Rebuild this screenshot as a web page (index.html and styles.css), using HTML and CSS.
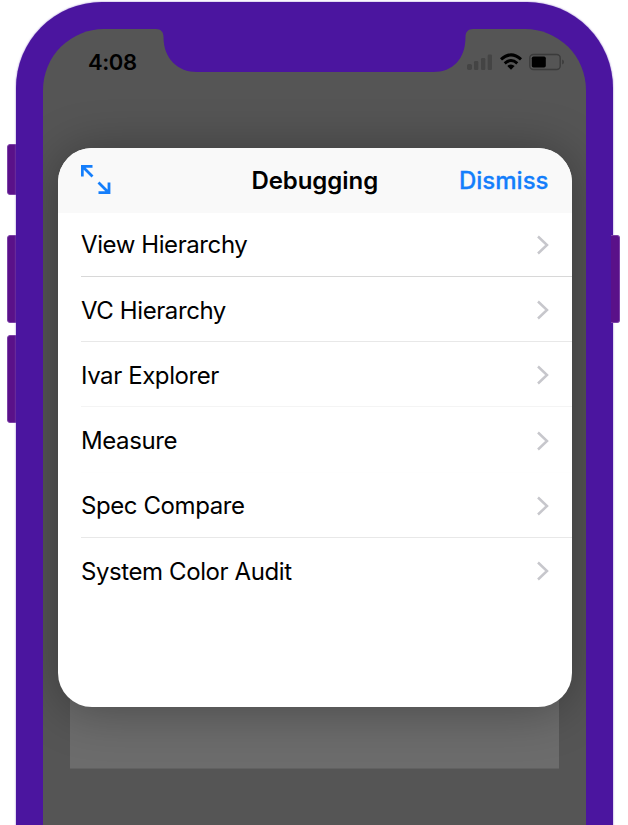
FILE: index.html
```html
<!DOCTYPE html>
<html lang="en">
<head>
<meta charset="utf-8">
<title>Debugging</title>
<link rel="stylesheet" href="styles.css">
</head>
<body>
<div class="stage">
  <span class="side-button mute"></span>
  <span class="side-button volume-up"></span>
  <span class="side-button volume-down"></span>
  <span class="side-button power"></span>
  <div class="phone">
    <div class="screen">
      <svg class="notch" width="320" height="46" viewBox="0 0 320 46"><path d="M0 0H320V3H317C312 3 309.500 6 309.500 11C309.500 33 297 46 277 46H41C22 46 7.500 33 7.500 11C7.500 6 5 3 0 3Z"/></svg>
      <div class="status">
        <span class="time">4:08</span>
        <div class="indicators">
          <svg width="26" height="18" viewBox="0 0 26 18" class="signal"><rect x="0" y="11" width="5" height="6" rx="1.800"/><rect x="7" y="8" width="4.300" height="9" rx="1.300"/><rect x="14" y="5" width="4.300" height="12" rx="1.300"/><rect x="20.700" y="1.500" width="4.300" height="15.500" rx="1.300"/></svg>
          <svg width="22" height="18" viewBox="0 0 22 18" class="wifi"><path d="M1 6.400Q11-2.700 21 6.400M4.700 10.300Q11 4.800 17.300 10.300"/><path class="dot" d="M11 16.800L7.300 13Q11 10 14.700 13Z"/></svg>
          <svg width="36" height="18" viewBox="0 0 36 18" class="battery"><rect class="shell" x=".8" y="1.500" width="30.400" height="15" rx="3.500"/><rect x="2.800" y="3.500" width="14" height="11" rx="1.700"/><path class="tip" d="M33.200 6.500Q35 7.200 35 9T33.200 11.500Z"/></svg>
        </div>
      </div>
      <div class="backdrop"></div>
      <main class="sheet">
        <header class="bar">
          <svg class="expand" width="30" height="30" viewBox="0 0 30 30"><path d="M1.300 12.500V2.300H11.500M1.500 2.500L11.500 12.500M28 18.500V28.700H17.500M27.500 28.500L17.500 18.500"/></svg>
          <h1 class="title">Debugging</h1>
          <span class="dismiss">Dismiss</span>
        </header>
        <ul class="list">
          <li class="row strong"><span>View Hierarchy</span><svg class="chevron" width="13" height="20" viewBox="0 0 13 20"><path d="M2 1.500L11 10L2 18.500"/></svg></li>
          <li class="row"><span>VC Hierarchy</span><svg class="chevron" width="13" height="20" viewBox="0 0 13 20"><path d="M2 1.500L11 10L2 18.500"/></svg></li>
          <li class="row faint"><span>Ivar Explorer</span><svg class="chevron" width="13" height="20" viewBox="0 0 13 20"><path d="M2 1.500L11 10L2 18.500"/></svg></li>
          <li class="row fainter"><span>Measure</span><svg class="chevron" width="13" height="20" viewBox="0 0 13 20"><path d="M2 1.500L11 10L2 18.500"/></svg></li>
          <li class="row"><span>Spec Compare</span><svg class="chevron" width="13" height="20" viewBox="0 0 13 20"><path d="M2 1.500L11 10L2 18.500"/></svg></li>
          <li class="row last"><span>System Color Audit</span><svg class="chevron" width="13" height="20" viewBox="0 0 13 20"><path d="M2 1.500L11 10L2 18.500"/></svg></li>
        </ul>
      </main>
    </div>
  </div>
</div>
</body>
</html>
```
FILE: styles.css
```css
* { box-sizing: border-box; }
body { margin: 0; background: #fff; font-family: Inter, "Liberation Sans", sans-serif; color: #000; }
.stage { position: relative; width: 628px; height: 825px; overflow: hidden; padding: 1.5px 15.5px 0 15.5px; }
.phone { position: relative; height: 900px; padding: 27.5px 26.5px 0 27.5px; background: #4b159f; border-radius: 86px 86px 0 0; box-shadow: 0 0 2px #8d6fc8; }
.side-button { position: absolute; width: 12px; background: #5a1189; border: 1px solid #7c40a6; border-radius: 3px; }
.mute { left: 6.5px; top: 144px; height: 51px; }
.volume-up { left: 6.5px; top: 235px; height: 88px; }
.volume-down { left: 6.5px; top: 335px; height: 88px; }
.power { right: 8px; top: 235px; height: 88px; z-index: 1; width: 9px; border-left: 0; border-radius: 0 3px 3px 0; }
.screen { position: relative; height: 860px; overflow: hidden; background: #555; border-radius: 61px 61px 0 0; }
.notch { position: absolute; left: 113px; top: -3px; fill: #4b159f; }
.status { display: flex; justify-content: space-between; height: 119px; padding: 20px 21px 0 45px; }
.time { font-size: 22px; line-height: 26px; font-weight: 600; letter-spacing: -.4px; }
.indicators { display: flex; gap: 7px; padding-top: 4px; }
.signal { fill: #444; }
.wifi { fill: none; stroke: #000; stroke-width: 3; }
.wifi .dot { fill: #000; stroke: none; }
.battery .shell { fill: none; stroke: #3b3b3b; stroke-width: 1.4; }
.battery .tip { fill: #3b3b3b; }
.backdrop { position: absolute; left: 27px; top: 641px; width: 489px; height: 99px; background: #6c6c6c; border-bottom: 1px solid #616161; }
.sheet { position: relative; margin: 0 14.5px 0 15px; height: 559px; border-radius: 34px; background: #fff; box-shadow: 0 3px 50px rgba(0,0,0,.33); }
.bar { display: grid; grid-template-columns: 1fr auto 1fr; align-items: center; height: 65px; padding: 0 23px 1px 23px; background: #f9f9f9; border-radius: 34px 34px 0 0; }
.expand { fill: none; stroke: #147efb; stroke-width: 2.8; margin-bottom: 2px; }
.title { margin: 1px 0 0; font-size: 24px; line-height: 30px; font-weight: 600; letter-spacing: -.05px; }
.dismiss { justify-self: end; margin-top: 1px; font-size: 24px; line-height: 30px; font-weight: 500; -webkit-text-stroke: .3px #147efb; color: #147efb; }
.list { list-style: none; margin: 0; padding: 0 0 0 23px; font-size: 24px; letter-spacing: -.41px; }
.row { display: flex; align-items: center; justify-content: space-between; height: 65.1px; padding: 2px 22.5px 0 0; border-bottom: 1px solid #e8e8e8; }
.row.strong { height: 64px; border-color: #d8d8d8; padding-top: 0; }
.row.faint { border-color: #f4f4f4; }
.row.fainter { height: 65.7px; border-color: #fefefe; }
.row.last { border: 0; padding-top: 1px; }
.chevron { fill: none; stroke: #c7c7cc; stroke-width: 2.5; }
```
